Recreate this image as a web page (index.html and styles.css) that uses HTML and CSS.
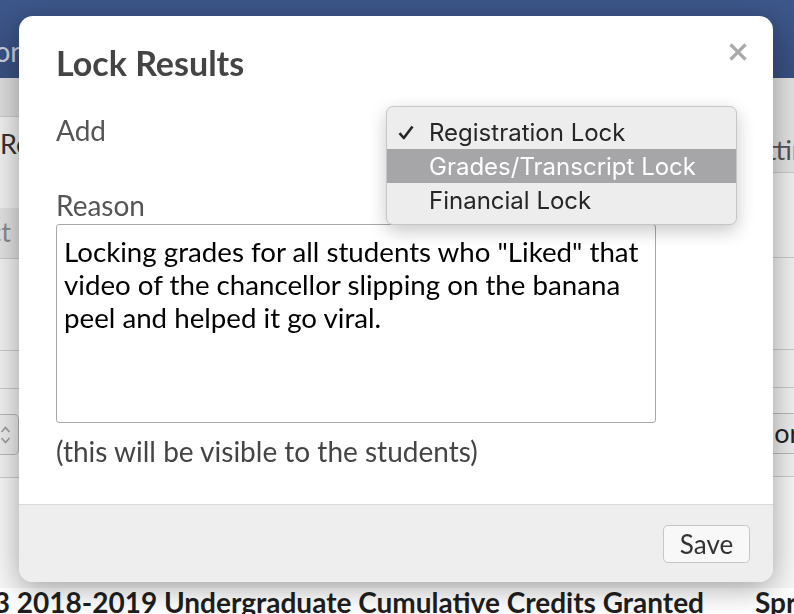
FILE: index.html
```html
<!DOCTYPE html>
<html lang="en">
<head>
<meta charset="utf-8">
<title>Lock Results</title>
<link rel="stylesheet" href="styles.css">
</head>
<body>
<div class="page">
  <header class="nav">
    <div class="brand"><span>Registration</span></div>
  </header>
  <div class="content">
    <div class="col col-left">
      <div class="cell tb"></div>
      <div class="cell hd">Results</div>
      <div class="cell band"><div class="clip-end"><span>Select</span></div></div>
      <div class="cell r1"></div>
      <div class="cell r2"></div>
      <div class="cell r3">
        <div class="sel-left">
          <svg width="11" height="22" viewBox="0 0 11 22"><path d="M1.5 8 L5.5 3.5 L9.5 8 M1.5 14 L5.5 18.5 L9.5 14" fill="none" stroke="#9a9a9a" stroke-width="1.6"/></svg>
        </div>
      </div>
      <div class="cell rest"></div>
    </div>
    <div class="col col-mid"></div>
    <div class="col col-right">
      <div class="cell rh"><span class="rh-text">Settings</span></div>
      <div class="cell q1"></div>
      <div class="cell q2"></div>
      <div class="cell r2"></div>
      <div class="cell r3"><div class="sel-right"><span class="sel-text">Prior</span></div></div>
      <div class="cell rest"></div>
    </div>
  </div>
  <div class="bottom">
    <div class="bcell"><span class="clip-end narrow"><span>UG3</span></span> 2018-2019 Undergraduate Cumulative Credits Granted</div>
    <div class="bcell">Spring 2019</div>
  </div>
</div>

<div class="modal">
  <div class="modal-header">
    <h1 class="modal-title">Lock Results</h1>
    <svg class="close" width="18" height="18" viewBox="0 0 18 18"><path d="M1.5 1.5 L16.5 16.5 M16.5 1.5 L1.5 16.5" stroke="#a9a9a9" stroke-width="3.2"/></svg>
  </div>
  <div class="modal-body">
    <div class="add-row">
      <span class="label">Add</span>
      <div class="select-box"></div>
      <ul class="menu">
        <li class="opt"><span class="check"><svg width="16" height="15" viewBox="0 0 16 15"><path d="M1.5 8.2 L5.8 13 L14.5 1.5" fill="none" stroke="#262626" stroke-width="2.6" stroke-linejoin="round"/></svg></span>Registration Lock</li>
        <li class="opt active"><span class="check"></span>Grades/Transcript Lock</li>
        <li class="opt"><span class="check"></span>Financial Lock</li>
      </ul>
    </div>
    <div class="label reason">Reason</div>
    <div class="textarea">Locking grades for all students who "Liked" that video of the chancellor slipping on the banana peel and helped it go viral.</div>
    <div class="help">(this will be visible to the students)</div>
  </div>
  <div class="modal-footer">
    <button class="btn">Save</button>
  </div>
</div>
</body>
</html>
```
FILE: styles.css
```css
* { box-sizing: border-box; margin: 0; padding: 0; }
html, body { width: 794px; height: 614px; overflow: hidden; }
body { font-family: Lato, "Liberation Sans", sans-serif; background: #f4f4f4; color: #333; }

.page { height: 614px; display: flex; flex-direction: column; }
.nav { height: 78px; flex: none; background: linear-gradient(#3e588c, #384f80); display: flex; align-items: flex-start; padding-top: 35px; }
.brand { display: flex; justify-content: flex-end; width: 26px; white-space: nowrap; color: #c9cfdc; font-size: 28px; line-height: 32px; }

.content { display: flex; height: 510px; flex: none; }
.col { display: flex; flex-direction: column; overflow: hidden; white-space: nowrap; }
.col-left { width: 19px; }
.col-mid { flex: 1; }
.col-right { width: 50px; }
.cell { border-bottom: 1px solid #c9c9c9; font-size: 27px; line-height: 30px; overflow: hidden; }
.tb { height: 39px; background: #dcdcdc; }
.hd { height: 91px; background: #efefef; color: #333; padding-top: 12px; border-bottom: none; }
.band { height: 51px; background: #e0e0e0; color: #8a8a8a; padding-top: 9px; display: flex; }
.clip-end { display: inline-flex; justify-content: flex-end; width: 11px; white-space: nowrap; }
.r1 { height: 92px; background: #f0f0f0; }
.r2 { height: 38px; background: #f0f0f0; }
.r3 { height: 89px; background: #f0f0f0; padding-top: 25px; }
.rest { flex: 1; background: #f6f6f6; border-bottom: none; }
.sel-left { width: 19px; height: 41px; border: 1px solid #b8b8b8; border-left: none; border-radius: 0 5px 5px 0; background: #ebebeb; display: flex; align-items: center; }
.rh { height: 95px; background: #e2e2e2; color: #555; padding: 57px 0 0 0; }
.rh-text { display: inline-block; margin-left: -6px; }
.q1 { height: 85px; background: #efefef; }
.q2 { height: 92px; background: #f0f0f0; }
.sel-right { height: 41px; border: 1px solid #b8b8b8; border-right: none; background: #ebebeb; color: #222; line-height: 38px; }
.sel-text { display: inline-block; margin-left: -3px; }

.bottom { display: grid; grid-template-columns: 755px auto; height: 26px; font-size: 28px; line-height: 28px; font-weight: 700; color: #1f1f1f; white-space: nowrap; overflow: hidden; background: #fff; }
.clip-end.narrow { width: 10px; }

/* modal */
.modal { position: fixed; left: 19px; top: 16px; width: 754px; height: 566px; background: #fff; border-radius: 14px; box-shadow: 0 6px 30px rgba(0,0,0,.35); display: flex; flex-direction: column; }
.modal-header { display: flex; justify-content: space-between; align-items: flex-start; padding: 26px 26px 0 37px; }
.modal-title { font-size: 34px; line-height: 41px; font-weight: 700; color: #444; }
.close { margin-top: 1px; }
.modal-body { flex: 1; padding: 0 36px 0 37px; }
.label { font-size: 28px; line-height: 30px; color: #555; }
.add-row { position: relative; display: flex; align-items: center; margin-top: 32px; height: 30px; }
.select-box { margin-left: auto; width: 351px; height: 34px; border: 1px solid #c4c4c4; border-radius: 5px; background: #f7f7f7; }
.menu { position: absolute; left: 330px; top: -9px; width: 351px; padding: 8px 0 7px; list-style: none; background: #ededed; border: 1px solid #c6c6c6; border-radius: 7px; box-shadow: 0 6px 18px rgba(0,0,0,.22); font-family: Inter, "Noto Sans", sans-serif; font-size: 24px; color: #262626; }
.opt { display: flex; align-items: center; height: 34px; padding-left: 11px; }
.opt.active { background: #a6a6a9; color: #fff; }
.check { width: 31px; display: flex; align-items: center; }
.reason { margin-top: 45px; }
.textarea { margin-top: 4px; width: 600px; height: 199px; border: 1px solid #a8a8a8; border-radius: 3px; padding: 10px 7px 6px; font-size: 27.7px; line-height: 33px; color: #000; }
.help { margin-top: 13px; font-size: 28px; line-height: 30px; color: #444; }
.modal-footer { height: 78px; flex: none; border-top: 1px solid #dadada; background: #eeeeee; border-radius: 0 0 14px 14px; display: flex; justify-content: flex-end; padding: 20px 23px 0 0; }
.btn { width: 87px; height: 38px; font-family: Lato, sans-serif; font-size: 26px; color: #333; background: #f8f8f8; border: 1px solid #c6c6c6; border-radius: 5px; }
```
